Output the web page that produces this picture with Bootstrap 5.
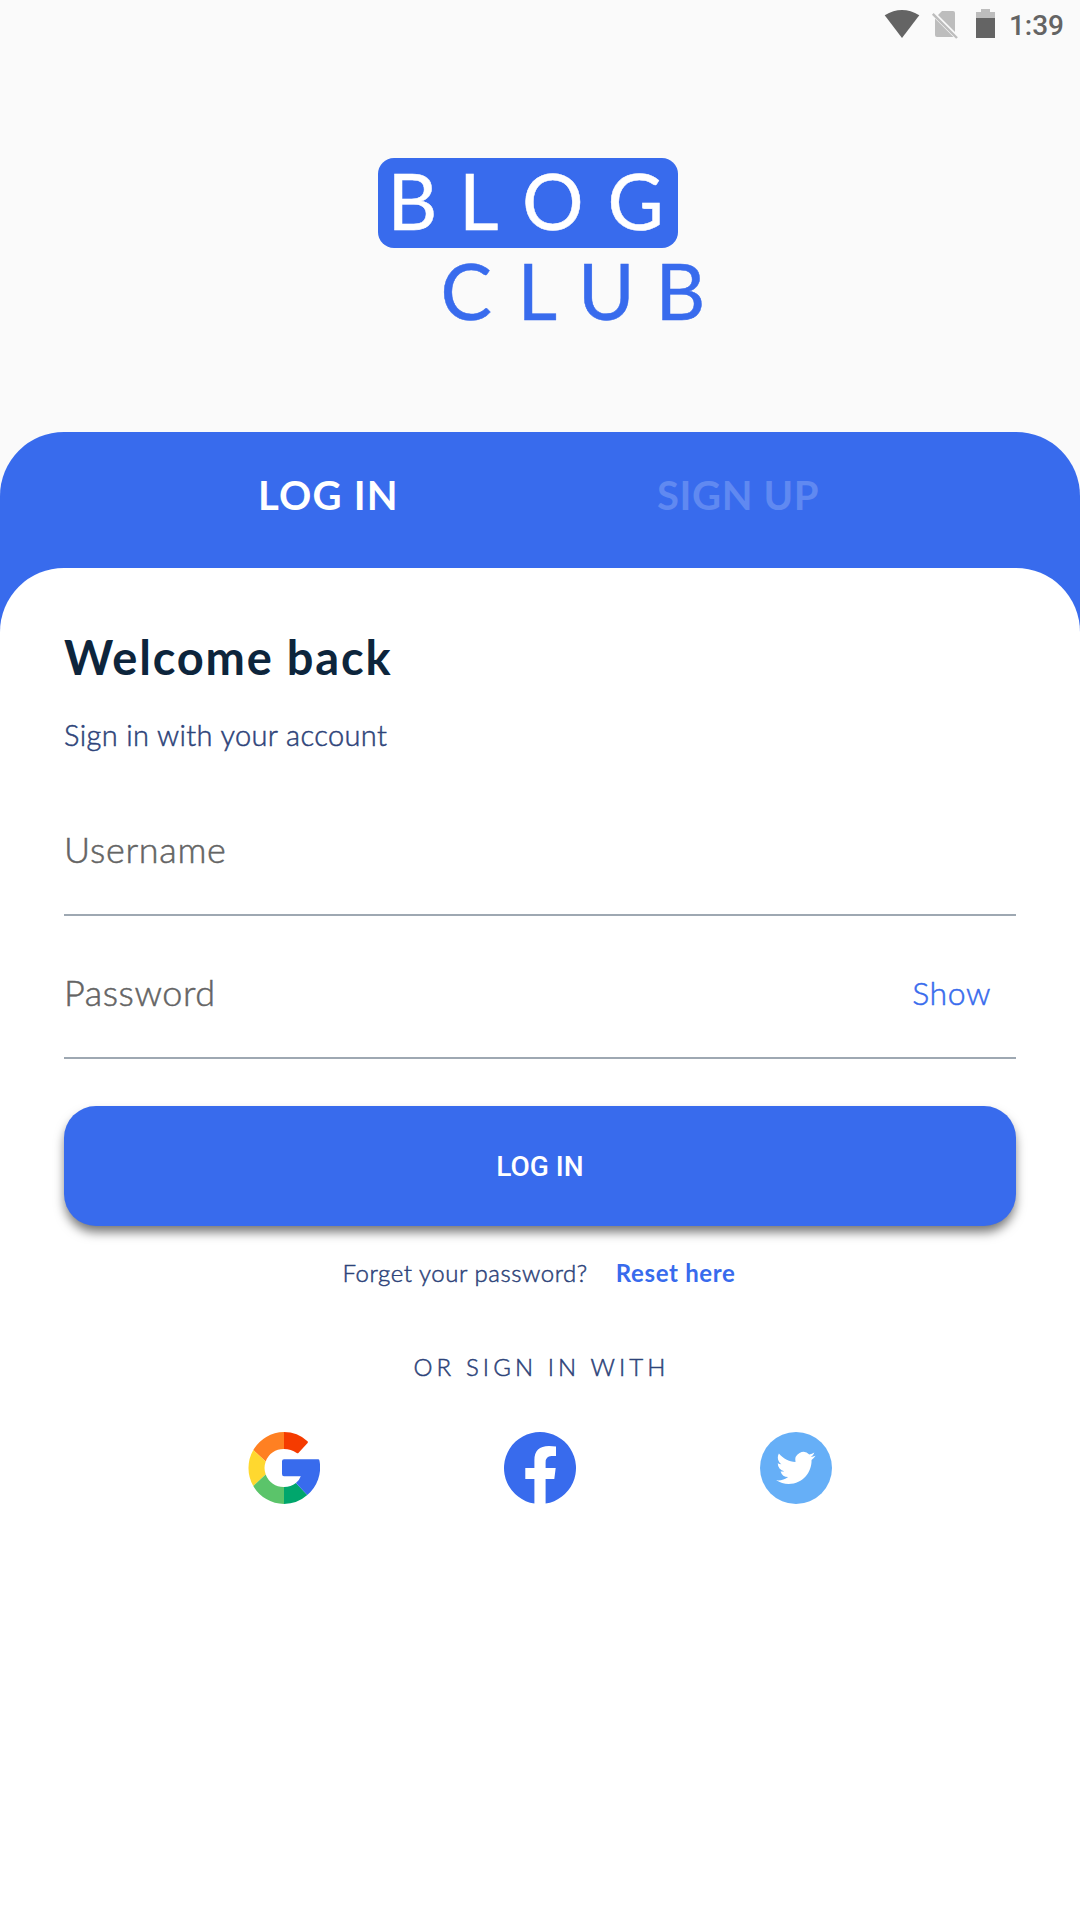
<!DOCTYPE html>
<html lang="en">
<head>
<meta charset="utf-8">
<meta name="viewport" content="width=device-width, initial-scale=1">
<title>Blog Club</title>
<link href="https://cdn.jsdelivr.net/npm/bootstrap@5.3.0/dist/css/bootstrap.min.css" rel="stylesheet">
<style>
body{background:#fafafa;font-family:Lato,"Open Sans",sans-serif;overflow:hidden}
.screen{width:1080px;height:1920px}
.status{height:50px;padding-right:16px}
.status-time{font:500 28px/48px Roboto,sans-serif;color:#646464;margin-left:13px;padding-top:2px}
.logo{height:382px;padding-top:92px}
.tabs-panel{background:#386bed;border-radius:64px 64px 0 0}
.tab-row{height:136px;padding:31px 0 0 258px}
.tab-item{font-size:40px;font-weight:700;line-height:64px;color:#fff;border:0;background:none;padding:0;text-align:left;white-space:nowrap}
.tab-login{width:399px;letter-spacing:1.2px}
.tab-signup{color:#6089f1;letter-spacing:.6px}
.form-panel{background:#fff;border-radius:64px 64px 0 0;padding:57px 64px 0;height:1352px}
.title-line{font-size:47px;font-weight:700;line-height:64px;color:#0d253c;letter-spacing:1.8px}
.book-weight{font-weight:300;-webkit-text-stroke:.5px currentColor}
.sub-line{font-size:29px;line-height:40px;color:#2d4379;margin-top:26px;letter-spacing:.36px}
.field{height:143px;padding-top:11px;border-bottom:2px solid #9ea8b2;font-size:36px;letter-spacing:.55px;color:#646464}
.field-user{margin-top:18px;letter-spacing:.7px}
.show-btn{font-size:32px;color:#386bed;margin-right:25px;padding-top:1px}
.login-btn{height:120px;margin-top:47px;border-radius:32px;background:#386bed;color:#fff;font:500 28px/1 Roboto,sans-serif;box-shadow:0 7px 11px -1px rgba(0,0,0,.55)}
.login-btn span{padding-top:1px}
.reset-row{margin-top:27px;font-size:24px;line-height:40px;color:#2d4379;letter-spacing:.55px}
.reset-link{font-weight:700;color:#386bed;margin-left:28px;letter-spacing:.65px;margin-right:2px}
.or-line{margin-top:54px;font-size:24px;line-height:40px;color:#2d4379;letter-spacing:4.1px;padding-left:3px}
.social{margin-top:45px;gap:184px}
</style>
<script src="https://cdn.jsdelivr.net/npm/bootstrap@5.3.0/dist/js/bootstrap.bundle.min.js"></script>
</head>
<body>
<div class="screen d-flex flex-column">
  <header class="status d-flex justify-content-end align-items-center">
    <svg width="112" height="50" viewBox="884 0 112 50">
      <path d="M884.7 15.3Q902 4.8 919.3 15.3L902 38Z" fill="#646464"/>
      <path d="M942 11H953Q955 11 955 13V32L938 15ZM935 18.5 953.5 37H937Q935 37 935 35Z" fill="#bdbdbd"/>
      <path d="M932.8 13.8 957 38" stroke="#bdbdbd" stroke-width="2.4"/>
      <path d="M976 18V12H981V9H990V12H995V18Z" fill="#bdbdbd"/><path d="M976 18H995V38H976Z" fill="#646464"/>
    </svg>
    <span class="status-time">1:39</span>
  </header>
  <div class="logo d-flex justify-content-center">
    <svg width="360" height="220" viewBox="360 142 360 220" font-family="Lato, sans-serif" font-size="77" stroke-width=".5">
      <rect x="378" y="158" width="300" height="90" rx="16" fill="#386bed"/>
      <text y="230.3" x="387.5 459 522 607.500" fill="#fff" stroke="#fff">BLOG</text>
      <text y="320.3" x="440.500 517.5 578 655.500" fill="#386bed" stroke="#386bed">CLUB</text>
    </svg>
  </div>
  <main class="tabs-panel">
    <nav class="tab-row d-flex align-items-start">
      <button class="tab-item tab-login">LOG IN</button>
      <button class="tab-item tab-signup">SIGN UP</button>
    </nav>
    <section class="form-panel">
      <div class="title-line">Welcome back</div>
      <div class="sub-line book-weight">Sign in with your account</div>
      <div class="field field-user book-weight d-flex align-items-center"><span>Username</span></div>
      <div class="field book-weight d-flex align-items-center justify-content-between"><span>Password</span><span class="show-btn book-weight">Show</span></div>
      <button class="login-btn btn w-100 d-flex align-items-center justify-content-center border-0"><span>LOG IN</span></button>
      <div class="reset-row d-flex justify-content-center"><span class="book-weight">Forget your password?</span><span class="reset-link">Reset here</span></div>
      <div class="or-line book-weight text-center">OR SIGN IN WITH</div>
      <div class="social d-flex justify-content-center">
        <svg width="72" height="72" viewBox="0 0 72 72">
          <path d="M36 0Q49.500 0 59.500 9.200Q60.400 10 59.600 10.900L50.600 20.700Q49.700 21.600 48.700 20.900Q43 17 36 17Z" fill="#f53b00"/>
          <path d="M36 0A36 36 0 0 0 5.300 18L17.700 29.500A19 19 0 0 1 36 17Z" fill="#ff8022"/>
          <path d="M5.300 18A36 36 0 0 0 5.300 54L17.700 42.500A19 19 0 0 1 17.700 29.500Z" fill="#ffd82f"/>
          <path d="M5.300 54A36 36 0 0 0 36 72V55A19 19 0 0 1 17.700 42.500Z" fill="#5bc46a"/>
          <path d="M36 72A36 36 0 0 0 59.300 63L47.900 51A19 19 0 0 1 36 55Z" fill="#00a66c"/>
          <path d="M59.300 63A36 36 0 0 0 71.500 28.700Q71.300 27.300 70 27.300H36Q34 27.300 34 29.300V42Q34 44.300 36 44.300H52.800Q51.500 48 47.900 51Z" fill="#386bed"/>
        </svg>
        <svg width="72" height="72" viewBox="0 0 72 72">
          <path d="M30.400 71.600A36 36 0 1 1 41.600 71.600V47H50.300L51.700 36H41.600V30.500Q41.600 24 47.500 24H52V14.500Q48.500 14 45 14Q30.400 14 30.400 28V36H21.300V47H30.400Z" fill="#386bed"/>
        </svg>
        <svg width="72" height="72" viewBox="0 0 72 72">
          <circle cx="36" cy="36" r="36" fill="#66aff7"/>
          <path transform="translate(16.200 16.300) scale(1.640)" fill="#fff" d="M23.953 4.570a10 10 0 0 1-2.825.775 4.958 4.958 0 0 0 2.163-2.723c-.951.555-2.005.959-3.127 1.184a4.920 4.920 0 0 0-8.384 4.482C7.690 8.095 4.067 6.130 1.640 3.162a4.822 4.822 0 0 0-.666 2.475c0 1.710.870 3.213 2.188 4.096a4.904 4.904 0 0 1-2.228-.616v.060a4.923 4.923 0 0 0 3.946 4.827 4.996 4.996 0 0 1-2.212.085 4.936 4.936 0 0 0 4.604 3.417 9.867 9.867 0 0 1-6.102 2.105c-.390 0-.779-.023-1.170-.067a13.995 13.995 0 0 0 7.557 2.209c9.053 0 13.998-7.496 13.998-13.985 0-.210 0-.420-.015-.630A9.935 9.935 0 0 0 24 4.590z"/>
        </svg>
      </div>
    </section>
  </main>
</div>
</body>
</html>
